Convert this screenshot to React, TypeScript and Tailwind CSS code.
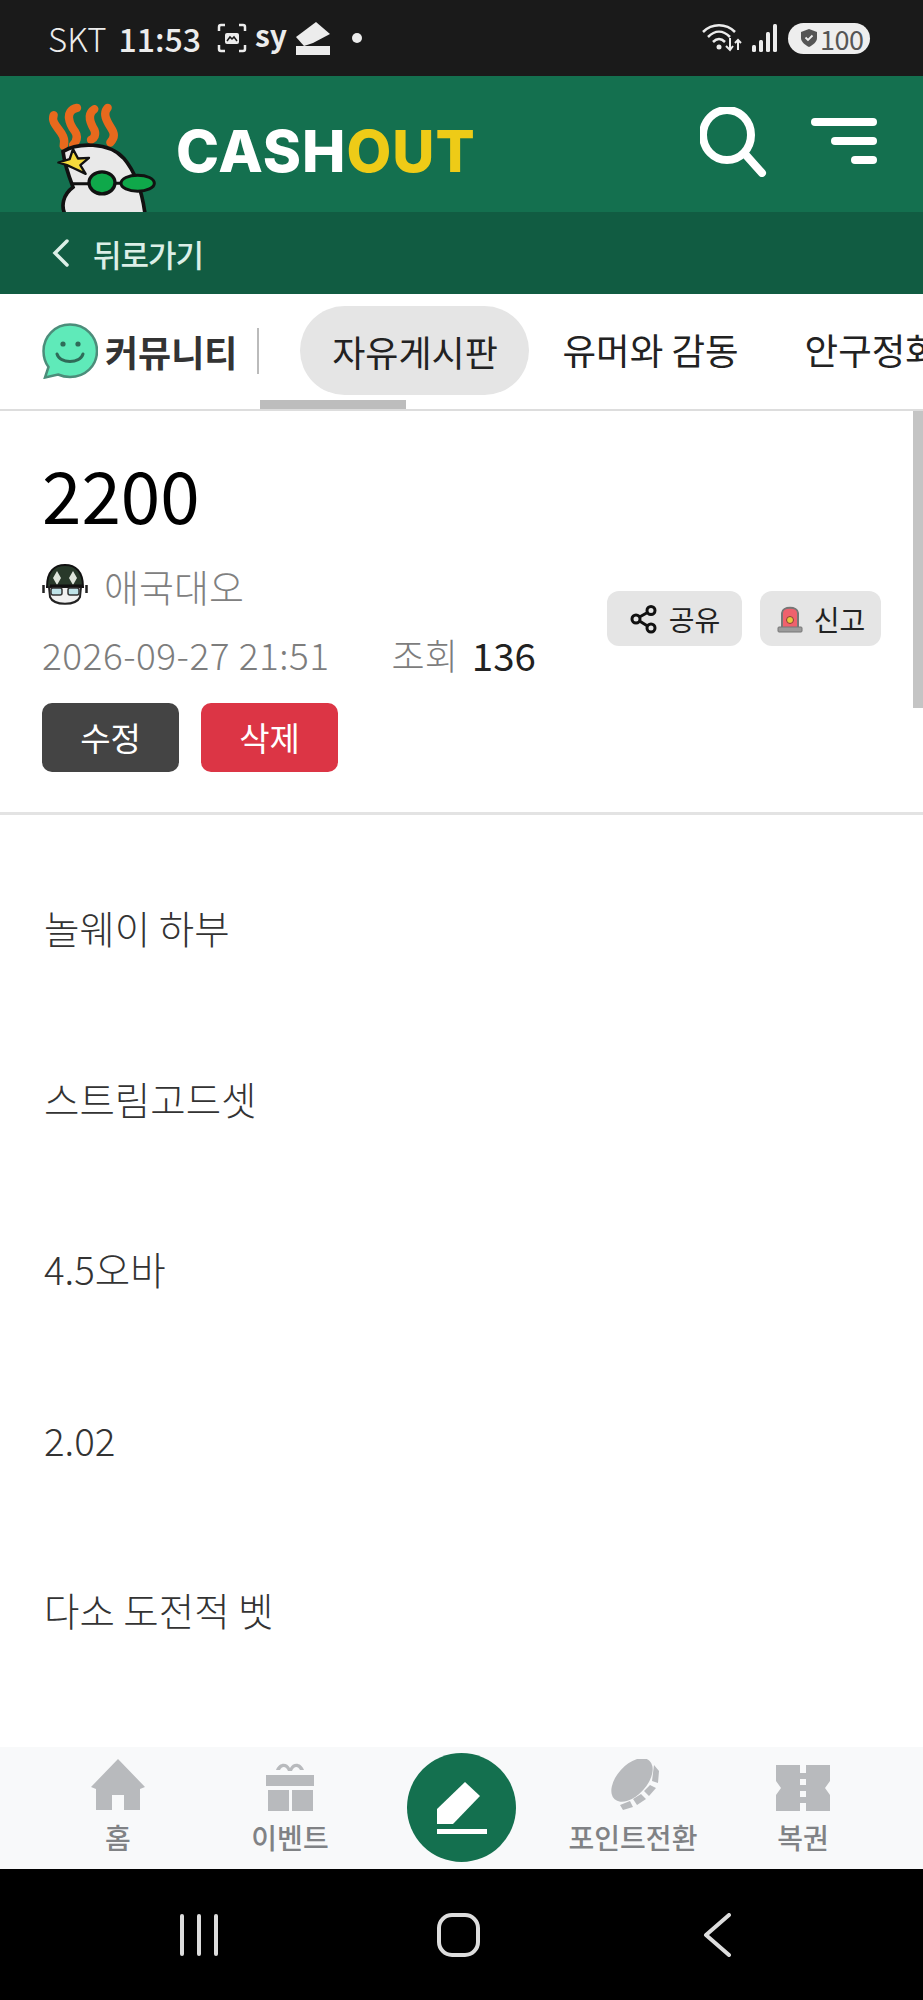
import React from 'react';

const bodyLines = ['놀웨이 하부', '스트림고드셋', '4.5오바', '2.02', '다소 도전적 벳'];

const Mascot = () => (
    <svg width="110" height="109" viewBox="50 40 330 326" className="block shrink-0">
        {/* flames */}
        <g fill="none" stroke="#e8691d" strokeWidth="25" strokeLinecap="round" strokeLinejoin="round">
            <path d="M70 76 C58 110 112 125 100 168" />
            <path d="M140 54 C100 62 118 105 134 125 C144 140 138 155 128 166" />
            <path d="M192 58 C165 75 185 108 192 120 C198 135 192 145 182 150" />
            <path d="M232 54 C212 75 238 105 248 125 C254 140 248 150 240 158" />
        </g>
        {/* head */}
        <path
            d="M98 185 C140 158 235 155 280 205 C318 250 338 320 345 380 L108 380 C88 350 100 312 128 292 C112 250 102 218 98 185 Z"
            fill="#e9e9e9"
            stroke="#111"
            strokeWidth="11"
        />
        {/* star */}
        <polygon
            points="128,178 143,206 176,204 150,226 166,252 132,236 110,226 84,218 118,208"
            fill="#f4d93c"
            stroke="#111"
            strokeWidth="7"
            strokeLinejoin="round"
        />
        {/* glasses */}
        <path d="M125 282 L178 282 M255 280 L276 280" stroke="#111" strokeWidth="9" fill="none" />
        <ellipse cx="215" cy="279" rx="39" ry="33" fill="#0fa84a" stroke="#111" strokeWidth="10" />
        <ellipse cx="322" cy="280" rx="50" ry="24" fill="#0fa84a" stroke="#111" strokeWidth="9" />
    </svg>
);

const SmileBubble = () => (
    <svg width="56" height="56" viewBox="0 0 56 56" className="shrink-0">
        <path
            d="M28 1.5 C43.5 1.5 55 13.5 55 28 C55 43 43 54 28 54 C23.5 54 19.5 53 16 51.5 L3 54.5 L6.5 44 C3 39.5 1.5 34 1.5 28 C1.5 13.5 13 1.5 28 1.5 Z"
            fill="#5feab9"
            stroke="#4c8d7a"
            strokeWidth="2.5"
        />
        <circle cx="21" cy="21" r="2.6" fill="#2f6b58" />
        <circle cx="36" cy="21" r="2.6" fill="#2f6b58" />
        <path d="M15 31 C18 41 38 41 41 31" fill="none" stroke="#2f6b58" strokeWidth="3" strokeLinecap="round" />
    </svg>
);

const Avatar = () => (
    <svg width="46" height="46" viewBox="0 0 46 46" className="shrink-0">
        <path d="M5 24 C5 8 13 2 23 2 C33 2 41 8 41 24 Z" fill="#28392a" stroke="#111" strokeWidth="2" />
        <path d="M15 8 L19 15 L15 22 L11 15 Z M31 8 L35 15 L31 22 L27 15 Z" fill="#dfe6dc" />
        <path d="M7 24 L39 24 L38 34 C34 43 12 43 8 34 Z" fill="#f1f1f1" stroke="#222" strokeWidth="2" />
        <path d="M8 23 L40 23" stroke="#111" strokeWidth="3" />
        <rect x="9" y="25" width="11" height="7" rx="2" fill="#bfe3e8" stroke="#333" strokeWidth="1.5" />
        <rect x="26" y="25" width="11" height="7" rx="2" fill="#bfe3e8" stroke="#333" strokeWidth="1.5" />
        <path d="M1.500 22 L1.500 30 M44.500 22 L44.500 30" stroke="#222" strokeWidth="2.500" />
    </svg>
);

const ShareIcon = () => (
    <svg width="30" height="30" viewBox="0 0 30 30" fill="none" stroke="#111" strokeWidth="3" className="shrink-0">
        <circle cx="22" cy="6.500" r="4" />
        <circle cx="7" cy="15" r="4" />
        <circle cx="22" cy="24" r="4" />
        <path d="M10.500 13 L18.500 8.500 M10.500 17 L18.500 22" />
    </svg>
);

const SirenIcon = () => (
    <svg width="28" height="30" viewBox="0 0 28 30" className="shrink-0">
        <path d="M6 24 L6 9 C6 2 22 2 22 9 L22 24 Z" fill="#f0616d" stroke="#777" strokeWidth="2" />
        <rect x="2" y="23" width="24" height="5" rx="1" fill="#9b9b9b" stroke="#777" strokeWidth="1" />
        <circle cx="14" cy="16" r="3.500" fill="#e8c93c" stroke="#8a3a3a" strokeWidth="1" />
    </svg>
);

const NavItem = ({ label, icon }: { label: string; icon: React.ReactNode }) => (
    <div className="flex flex-col items-center pt-[4px]">
        <div className="flex h-[54px] items-end justify-center">{icon}</div>
        <span className="mt-[8px] text-[28px] leading-[36px] font-medium whitespace-nowrap text-[#808285]">{label}</span>
    </div>
);

const App = () => {
    return (
        <div className="flex h-[2000px] w-[923px] flex-col overflow-hidden bg-white font-['Noto_Sans_CJK_KR','Noto_Sans',sans-serif]">
            {/* Status bar */}
            <div className="flex h-[76px] shrink-0 items-center justify-between bg-[#1a1a1a] pr-[53px] pl-[48px] text-[#ececec]">
                <div className="flex items-center">
                    <span className="text-[33px] leading-none font-light">SKT</span>
                    <span className="ml-[12px] text-[32px] leading-none font-medium">11:53</span>
                    <svg width="30" height="30" viewBox="0 0 30 30" fill="none" stroke="#ececec" strokeWidth="2.500" className="ml-[16px]">
                        <path d="M2 8 V4 Q2 2 4 2 H8 M22 2 H26 Q28 2 28 4 V8 M28 22 V26 Q28 28 26 28 H22 M8 28 H4 Q2 28 2 26 V22" />
                        <rect x="8" y="10" width="14" height="11" rx="2" fill="#ececec" stroke="none" />
                        <path d="M10 18 L13 14 L15 16 L17 14 L20 18" stroke="#1a1a1a" strokeWidth="1.500" />
                    </svg>
                    <span className="mt-[-8px] ml-[8px] text-[30px] leading-none font-bold">sy</span>
                    <svg width="34" height="33" viewBox="0 0 34 33" className="ml-[9px]" fill="#ececec">
                        <path d="M0 15 L20 0 L34 12 L17 21 L8 24 Z" />
                        <rect x="0" y="24" width="34" height="9" />
                    </svg>
                    <span className="ml-[22px] h-[10px] w-[10px] rounded-full bg-[#ececec]" />
                </div>
                <div className="flex items-center">
                    <svg width="40" height="28" viewBox="0 0 40 28" fill="none" stroke="#ececec" strokeWidth="2.500">
                        <path d="M1 8 C10 -1 24 -1 33 8 M6 13 C13 6 21 6 28 13 M11 18 C15 14 19 14 23 18" />
                        <circle cx="17" cy="23" r="2.500" fill="#ececec" stroke="none" />
                        <path d="M28 14 V26 M24 22 L28 26 L31 22 M36 26 V16 M33 19 L36 16 L39 19" strokeWidth="2" />
                    </svg>
                    <svg width="26" height="28" viewBox="0 0 26 28" fill="#ececec" className="ml-[10px]">
                        <rect x="0" y="21" width="4" height="7" rx="1.500" />
                        <rect x="7" y="16" width="4" height="12" rx="1.500" />
                        <rect x="14" y="8" width="4" height="20" rx="1.500" />
                        <rect x="21" y="0" width="4" height="28" rx="1.500" />
                    </svg>
                    <div className="ml-[10px] flex h-[31px] w-[82px] items-center rounded-full bg-[#eeeeee] pl-[13px]">
                        <svg width="16" height="18" viewBox="0 0 16 18" className="shrink-0">
                            <path d="M8 0 L16 3 V9 C16 13 12 16 8 18 C4 16 0 13 0 9 V3 Z" fill="#555" />
                            <path d="M4.500 8.500 L7 11 L11.500 6.500" fill="none" stroke="#eee" strokeWidth="1.800" />
                        </svg>
                        <span className="ml-[3px] text-[27px] leading-none tracking-[-0.5px] text-[#555]">100</span>
                    </div>
                </div>
            </div>

            {/* Header */}
            <div className="flex h-[136px] shrink-0 items-end overflow-hidden bg-[#14704f] pr-[46px] pl-[47px]">
                <Mascot />
                <div className="mb-[32px] ml-[19px] text-[58px] leading-[58px] font-extrabold tracking-[1px] font-['Inter','Noto_Sans',sans-serif] text-white">
                    CASH<span className="text-[#eecb17]">OUT</span>
                </div>
                <div className="ml-auto flex self-start pt-[31px]">
                    <svg width="68" height="70" viewBox="0 0 68 70" fill="none" stroke="#fff" strokeWidth="8" strokeLinecap="round">
                        <ellipse cx="27" cy="28" rx="24" ry="25" />
                        <path d="M45 47 L62 66" />
                    </svg>
                    <div className="ml-[43px] flex w-[66px] flex-col items-end gap-[11px] pt-[11px]">
                        <span className="h-[8px] w-[66px] rounded-full bg-white" />
                        <span className="h-[8px] w-[46px] rounded-full bg-white" />
                        <span className="h-[8px] w-[26px] rounded-full bg-white" />
                    </div>
                </div>
            </div>

            {/* Back bar */}
            <div className="flex h-[82px] shrink-0 items-center bg-[#115c42] pl-[52px] text-[#dcefe7]">
                <svg width="17" height="28" viewBox="0 0 17 28" fill="none" stroke="#dcefe7" strokeWidth="3.500" strokeLinecap="round">
                    <path d="M15 2 L3 14 L15 26" />
                </svg>
                <span className="ml-[24px] text-[31px] leading-none font-medium tracking-[-1px]">뒤로가기</span>
            </div>

            {/* Tabs */}
            <div className="relative flex h-[117px] shrink-0 items-center overflow-hidden border-b-[2px] border-[#dddddd] pb-[2px] pl-[42px]">
                <SmileBubble />
                <span className="ml-[7px] text-[36px] leading-none font-bold whitespace-nowrap text-[#333]">커뮤니티</span>
                <span className="ml-[20px] h-[46px] w-[2px] shrink-0 bg-[#bbbbbb]" />
                <div className="ml-[41px] flex h-[89px] w-[229px] shrink-0 items-center justify-center rounded-[45px] bg-[#e5e5e5] text-[36px] leading-none whitespace-nowrap text-[#222]">
                    자유게시판
                </div>
                <span className="ml-[33px] shrink-0 text-[36.500px] leading-none whitespace-nowrap text-[#222]">유머와 감동</span>
                <span className="ml-[66px] shrink-0 text-[36.500px] leading-none whitespace-nowrap text-[#222]">안구정화</span>
                {/* active tab indicator */}
                <span className="absolute bottom-0 left-[260px] h-[9px] w-[146px] bg-[#bdbdbd]" />
            </div>

            <main className="relative min-h-0 flex-1 overflow-hidden">
                {/* Overlay scrollbar */}
                <span className="absolute top-0 right-0 h-[297px] w-[10px] bg-[#c4c4c4]" />

                {/* Post header */}
                <div className="h-[404px] border-b-[3px] border-[#e3e3e3] px-[42px] pt-[47px]">
                    <h1 className="text-[71px] leading-[70px] font-normal text-black">2200</h1>
                    <div className="mt-[35px] flex items-center justify-between">
                        <div>
                            <div className="flex items-center">
                                <Avatar />
                                <span className="ml-[16px] text-[38px] leading-[46px] font-light text-[#808080]">애국대오</span>
                            </div>
                            <div className="mt-[25px] flex items-center">
                                <span className="text-[37px] leading-[40px] font-light tracking-[0.5px] whitespace-nowrap text-[#7d7d7d]">2026-09-27 21:51</span>
                                <span className="ml-[62px] text-[36px] leading-[40px] font-light whitespace-nowrap text-[#7d7d7d]">조회</span>
                                <span className="ml-[14px] text-[38.500px] leading-[40px] text-[#222]">136</span>
                            </div>
                        </div>
                        <div className="flex gap-[18px]">
                            <button className="flex h-[55px] w-[135px] items-center justify-center gap-[10px] rounded-[12px] bg-[#e5e5e5] text-[28px] leading-none text-[#222]">
                                <ShareIcon />
                                공유
                            </button>
                            <button className="flex h-[55px] w-[121px] items-center justify-center gap-[10px] rounded-[12px] bg-[#e5e5e5] text-[28px] leading-none text-[#222]">
                                <SirenIcon />
                                신고
                            </button>
                        </div>
                    </div>
                    <div className="mt-[29px] flex gap-[22px]">
                        <button className="h-[69px] w-[137px] rounded-[10px] bg-[#444444] text-[33px] leading-none text-white">수정</button>
                        <button className="h-[69px] w-[137px] rounded-[10px] bg-[#dc3545] text-[33px] leading-none text-white">삭제</button>
                    </div>
                </div>

                {/* Post body */}
                <div className="flex flex-col gap-[113.500px] pt-[84px] pl-[44px] text-[38.500px] leading-[57px] font-light text-[#333]">
                    {bodyLines.map((line) => (
                        <p key={line}>{line}</p>
                    ))}
                </div>
            </main>

            {/* Bottom nav */}
            <nav className="grid h-[122px] shrink-0 grid-cols-[172px_172px_171px_172px_168px] items-start bg-[#f8f9fa] pt-[6px] pl-[32px]">
                <NavItem
                    label="홈"
                    icon={
                        <svg width="54" height="52" viewBox="0 0 54 52" fill="#b8babd">
                            <path d="M27 0 L54 28 L49 30 L49 51 L33 51 L33 36 L21 36 L21 51 L5 51 L5 30 L0 28 Z" />
                        </svg>
                    }
                />
                <NavItem
                    label="이벤트"
                    icon={
                        <svg width="50" height="50" viewBox="0 0 50 50" fill="#b8babd">
                            <path d="M11 9 C14 1 22 1 25 7 C28 1 36 1 39 9 L35 9 C33 5 29 5 27 10 L23 10 C21 5 17 5 15 9 Z" />
                            <rect x="1" y="14" width="48" height="11" />
                            <rect x="3" y="29" width="21" height="21" />
                            <rect x="27" y="29" width="21" height="21" />
                        </svg>
                    }
                />
                <div className="flex h-[109px] w-[109px] items-center justify-center justify-self-center rounded-full bg-[#14704f]">
                    <svg width="50" height="52" viewBox="0 0 50 52" fill="#fff">
                        <path d="M28 0 L43 14 L16 42 L0 42 L0 27 Z" />
                        <rect x="0" y="47" width="50" height="5" />
                    </svg>
                </div>
                <NavItem
                    label="포인트전환"
                    icon={
                        <svg width="54" height="52" viewBox="0 0 54 52" fill="#b8babd">
                            <ellipse cx="26" cy="21" rx="26" ry="15" transform="rotate(-48 26 21)" />
                            <path d="M48 6 L53 12 L52 24 L46 22 Z M44 26 L50 29 L43 37 L38 32 Z M35 35 L40 40 L31 46 L27 40 Z M24 42 L27 48 L17 51 L14 46 Z" />
                        </svg>
                    }
                />
                <NavItem
                    label="복권"
                    icon={
                        <svg width="54" height="46" viewBox="0 0 54 46" fill="#b8babd">
                            <path d="M0 0 H24 V8 H30 V0 H54 V16 L49 23 L54 30 V46 H30 V38 H24 V46 H0 V30 L5 23 L0 16 Z M24 14 V20 H30 V14 Z M24 26 V32 H30 V26 Z" fillRule="evenodd" />
                        </svg>
                    }
                />
            </nav>

            {/* Android nav */}
            <div className="flex h-[131px] shrink-0 items-center bg-black">
                <div className="ml-[180px] flex gap-[13px]">
                    <span className="h-[42px] w-[4px] rounded-full bg-[#dddddd]" />
                    <span className="h-[42px] w-[4px] rounded-full bg-[#dddddd]" />
                    <span className="h-[42px] w-[4px] rounded-full bg-[#dddddd]" />
                </div>
                <span className="ml-[219px] h-[44px] w-[43px] rounded-[15px] border-[4px] border-[#dddddd]" />
                <svg width="28" height="44" viewBox="0 0 28 44" fill="none" stroke="#dddddd" strokeWidth="4" strokeLinecap="round" strokeLinejoin="round" className="ml-[223px]">
                    <path d="M26 2 L3 22 L26 42" />
                </svg>
            </div>
        </div>
    );
};

export default App;
